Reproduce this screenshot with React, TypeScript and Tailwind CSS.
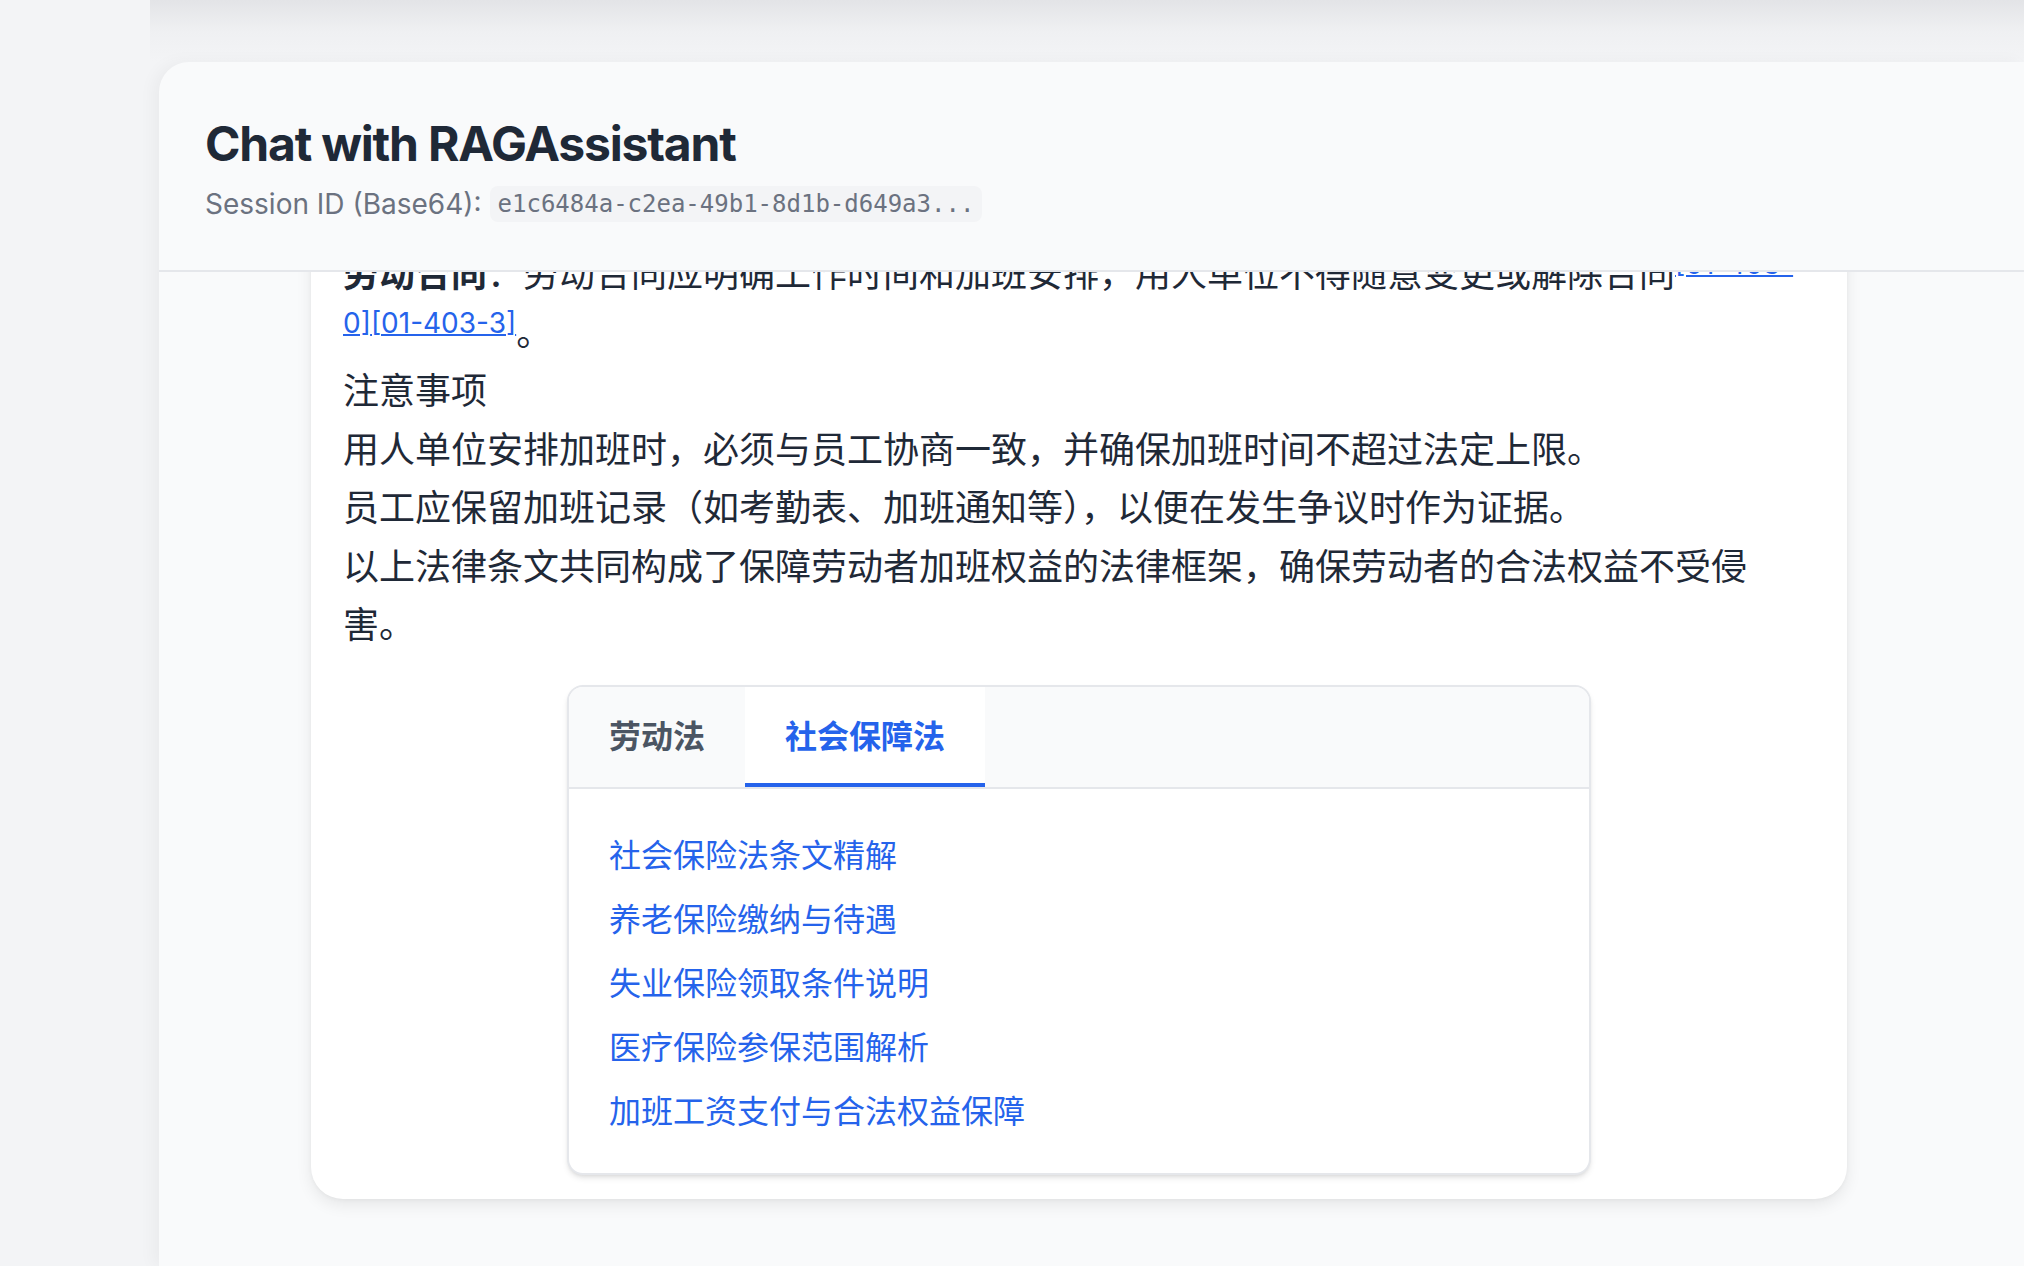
import type { ReactNode } from "react";

const font = "font-['Inter','Noto_Sans_CJK_SC',sans-serif]";

const socialLinks = [
  "社会保险法条文精解",
  "养老保险缴纳与待遇",
  "失业保险领取条件说明",
  "医疗保险参保范围解析",
  "加班工资支付与合法权益保障",
];

// citation markers are raised like <sup>, but must not grow the line box
const Cite = ({ children }: { children: ReactNode }) => (
  <a className="cursor-pointer align-super text-[28px] leading-none text-[#2563eb] underline decoration-2">
    {children}
  </a>
);

function Tabs() {
  return (
    <div className="mx-auto mt-[30px] w-full max-w-[1024px] overflow-hidden rounded-2xl border-2 border-[#e5e7eb] bg-white shadow-md">
      <div className="flex border-b-2 border-[#e5e7eb] bg-[#f9fafb]">
        <button className="border-b-4 border-transparent px-10 pt-[26px] pb-[22px] text-[32px] leading-[48px] font-semibold text-[#4b5563]">
          劳动法
        </button>
        <button className="border-b-4 border-[#2563eb] bg-white px-10 pt-[26px] pb-[22px] text-[32px] leading-[48px] font-semibold text-[#2563eb]">
          社会保障法
        </button>
      </div>
      <div className="flex flex-col items-start gap-4 px-10 pt-[43px] pb-[37px]">
        {socialLinks.map((t) => (
          <a
            key={t}
            className="cursor-pointer text-[32px] leading-[48px] text-[#2563eb]"
          >
            {t}
          </a>
        ))}
      </div>
    </div>
  );
}

export default function App() {
  return (
    <div
      className={`flex h-screen w-full flex-col overflow-hidden bg-[#f3f4f6] ${font}`}
    >
      {/* shadow of the app bar scrolled above */}
      <div className="flex h-[62px] shrink-0">
        <div className="w-[150px] shrink-0" />
        <div className="flex-1 bg-linear-to-b from-[#e3e4e7] via-[#eff0f2] to-[#f3f4f6]" />
      </div>

      <div className="flex min-h-0 flex-1">
        <div className="w-[159px] shrink-0" />

        <main className="flex min-w-0 flex-1 flex-col rounded-tl-[30px] bg-[#f9fafb] shadow-[-6px_0_16px_rgba(0,0,0,0.04)]">
          <header className="shrink-0 border-b-2 border-[#e5e7eb] pt-[50px] pb-[46px] pl-[46px]">
            <h1 className="text-[48px] leading-[64px] font-bold tracking-tight text-[#1f2937]">
              Chat with RAGAssistant
            </h1>
            <div className="mt-2 flex items-center gap-2 text-[28px] leading-[40px] text-[#6b7280]">
              <span>Session ID (Base64):</span>
              <code className="rounded-lg bg-[#f3f4f6] px-2 py-0.5 font-['DejaVu_Sans_Mono',monospace] text-[24px] leading-[32px] text-[#6b7280]">
                e1c6484a-c2ea-49b1-8d1b-d649a3...
              </code>
            </div>
          </header>

          <div className="min-h-0 flex-1 overflow-hidden pr-[25px]">
            <div className="mx-auto -mt-[51px] w-full max-w-[1536px] rounded-[32px] bg-white px-8 py-6 shadow-[0_6px_16px_rgba(0,0,0,0.08),0_1px_4px_rgba(0,0,0,0.04)]">
              <div className="text-[36px] leading-[58.5px] text-[#1f2937]">
                <p>
                  <strong className="font-bold">劳动合同</strong>
                  ：劳动合同应明确工作时间和加班安排，用人单位不得随意变更或解除合同
                  <Cite>
                    [01-403-
                    <br />
                    0]
                  </Cite>
                  <Cite>[01-403-3]</Cite>。
                </p>
                <p>注意事项</p>
                <p>
                  用人单位安排加班时，必须与员工协商一致，并确保加班时间不超过法定上限。
                </p>
                <p>
                  员工应保留加班记录（如考勤表、加班通知等），以便在发生争议时作为证据。
                </p>
                <p>
                  以上法律条文共同构成了保障劳动者加班权益的法律框架，确保劳动者的合法权益不受侵害。
                </p>
              </div>
              <Tabs />
            </div>
          </div>
        </main>
      </div>
    </div>
  );
}
